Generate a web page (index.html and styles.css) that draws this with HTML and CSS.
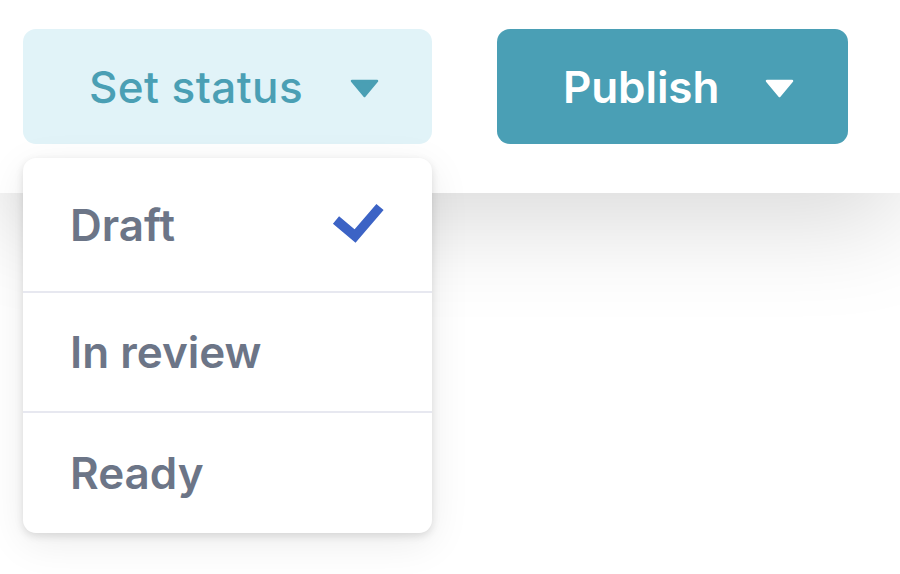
FILE: index.html
```html
<!DOCTYPE html>
<html lang="en">
<head>
<meta charset="utf-8">
<title>Set status</title>
<link rel="stylesheet" href="styles.css">
</head>
<body>
  <header class="toolbar">
    <div class="status-wrap">
      <button class="btn btn-status" type="button">
        <span class="btn-label">Set status</span>
        <svg class="caret" width="29" height="19" viewBox="0 0 29 19" aria-hidden="true"><polygon points="2,2 27,2 14.5,17" fill="currentColor" stroke="currentColor" stroke-width="2.5" stroke-linejoin="round"/></svg>
      </button>
      <ul class="menu">
        <li class="menu-item is-selected">
          <span>Draft</span>
          <svg class="check" width="54" height="44" viewBox="0 0 54 44" aria-hidden="true"><polyline points="5,19 24,35 49,6" fill="none" stroke="currentColor" stroke-width="9.5" stroke-linejoin="miter" stroke-linecap="butt"/></svg>
        </li>
        <li class="menu-item"><span>In review</span></li>
        <li class="menu-item"><span>Ready</span></li>
      </ul>
    </div>
    <button class="btn btn-publish" type="button">
      <span class="btn-label">Publish</span>
      <svg class="caret" width="29" height="19" viewBox="0 0 29 19" aria-hidden="true"><polygon points="2,2 27,2 14.5,17" fill="currentColor" stroke="currentColor" stroke-width="2.5" stroke-linejoin="round"/></svg>
    </button>
  </header>
  <main class="page"></main>
</body>
</html>
```
FILE: styles.css
```css
* { box-sizing: border-box; }

html, body {
  margin: 0;
  padding: 0;
  background: #ffffff;
  font-family: Inter, "Noto Sans", Roboto, sans-serif;
  overflow: hidden;
}

.toolbar {
  position: relative;
  z-index: 1;
  height: 193px;
  background: #ffffff;
  display: flex;
  align-items: flex-start;
  gap: 65px;
  padding: 29px 0 0 23px;
  box-shadow: 0 30px 100px rgba(0, 0, 0, 0.15);
}

.page {
  height: 381px;
  background: #ffffff;
}

.status-wrap {
  position: relative;
}

.btn {
  height: 115px;
  border: 0;
  border-radius: 13px;
  display: flex;
  align-items: center;
  font-family: inherit;
  font-size: 44px;
  cursor: pointer;
}

.btn-status {
  width: 409px;
  padding: 0 53px 0 66px;
  gap: 47px;
  background: #e1f3f8;
  color: #4a9fb4;
  font-weight: 500;
  letter-spacing: 0.4px;
}

.btn-publish {
  width: 351px;
  padding: 0 53px 0 66px;
  gap: 46px;
  background: #4a9fb5;
  color: #ffffff;
  font-weight: 600;
  letter-spacing: -0.1px;
}

.caret {
  flex: none;
  margin-top: 4px;
}

.menu {
  position: absolute;
  top: 129px;
  left: 0;
  width: 409px;
  margin: 0;
  padding: 0;
  list-style: none;
  background: #ffffff;
  border-radius: 13px;
  box-shadow: 0 3px 8px rgba(0, 0, 0, 0.12), 0 10px 40px rgba(0, 0, 0, 0.08);
  overflow: hidden;
  z-index: 2;
}

.menu-item {
  height: 120px;
  padding: 0 49px 0 47px;
  display: flex;
  align-items: center;
  justify-content: space-between;
  font-size: 44px;
  font-weight: 600;
  color: #6c7587;
  border-bottom: 2px solid #e7e8f0;
}

.menu-item:first-child {
  height: 135px;
}

.menu-item:last-child {
  border-bottom: 0;
}

.check {
  color: #3c63c5;
  margin-top: -4px;
  margin-right: -2px;
}
```
